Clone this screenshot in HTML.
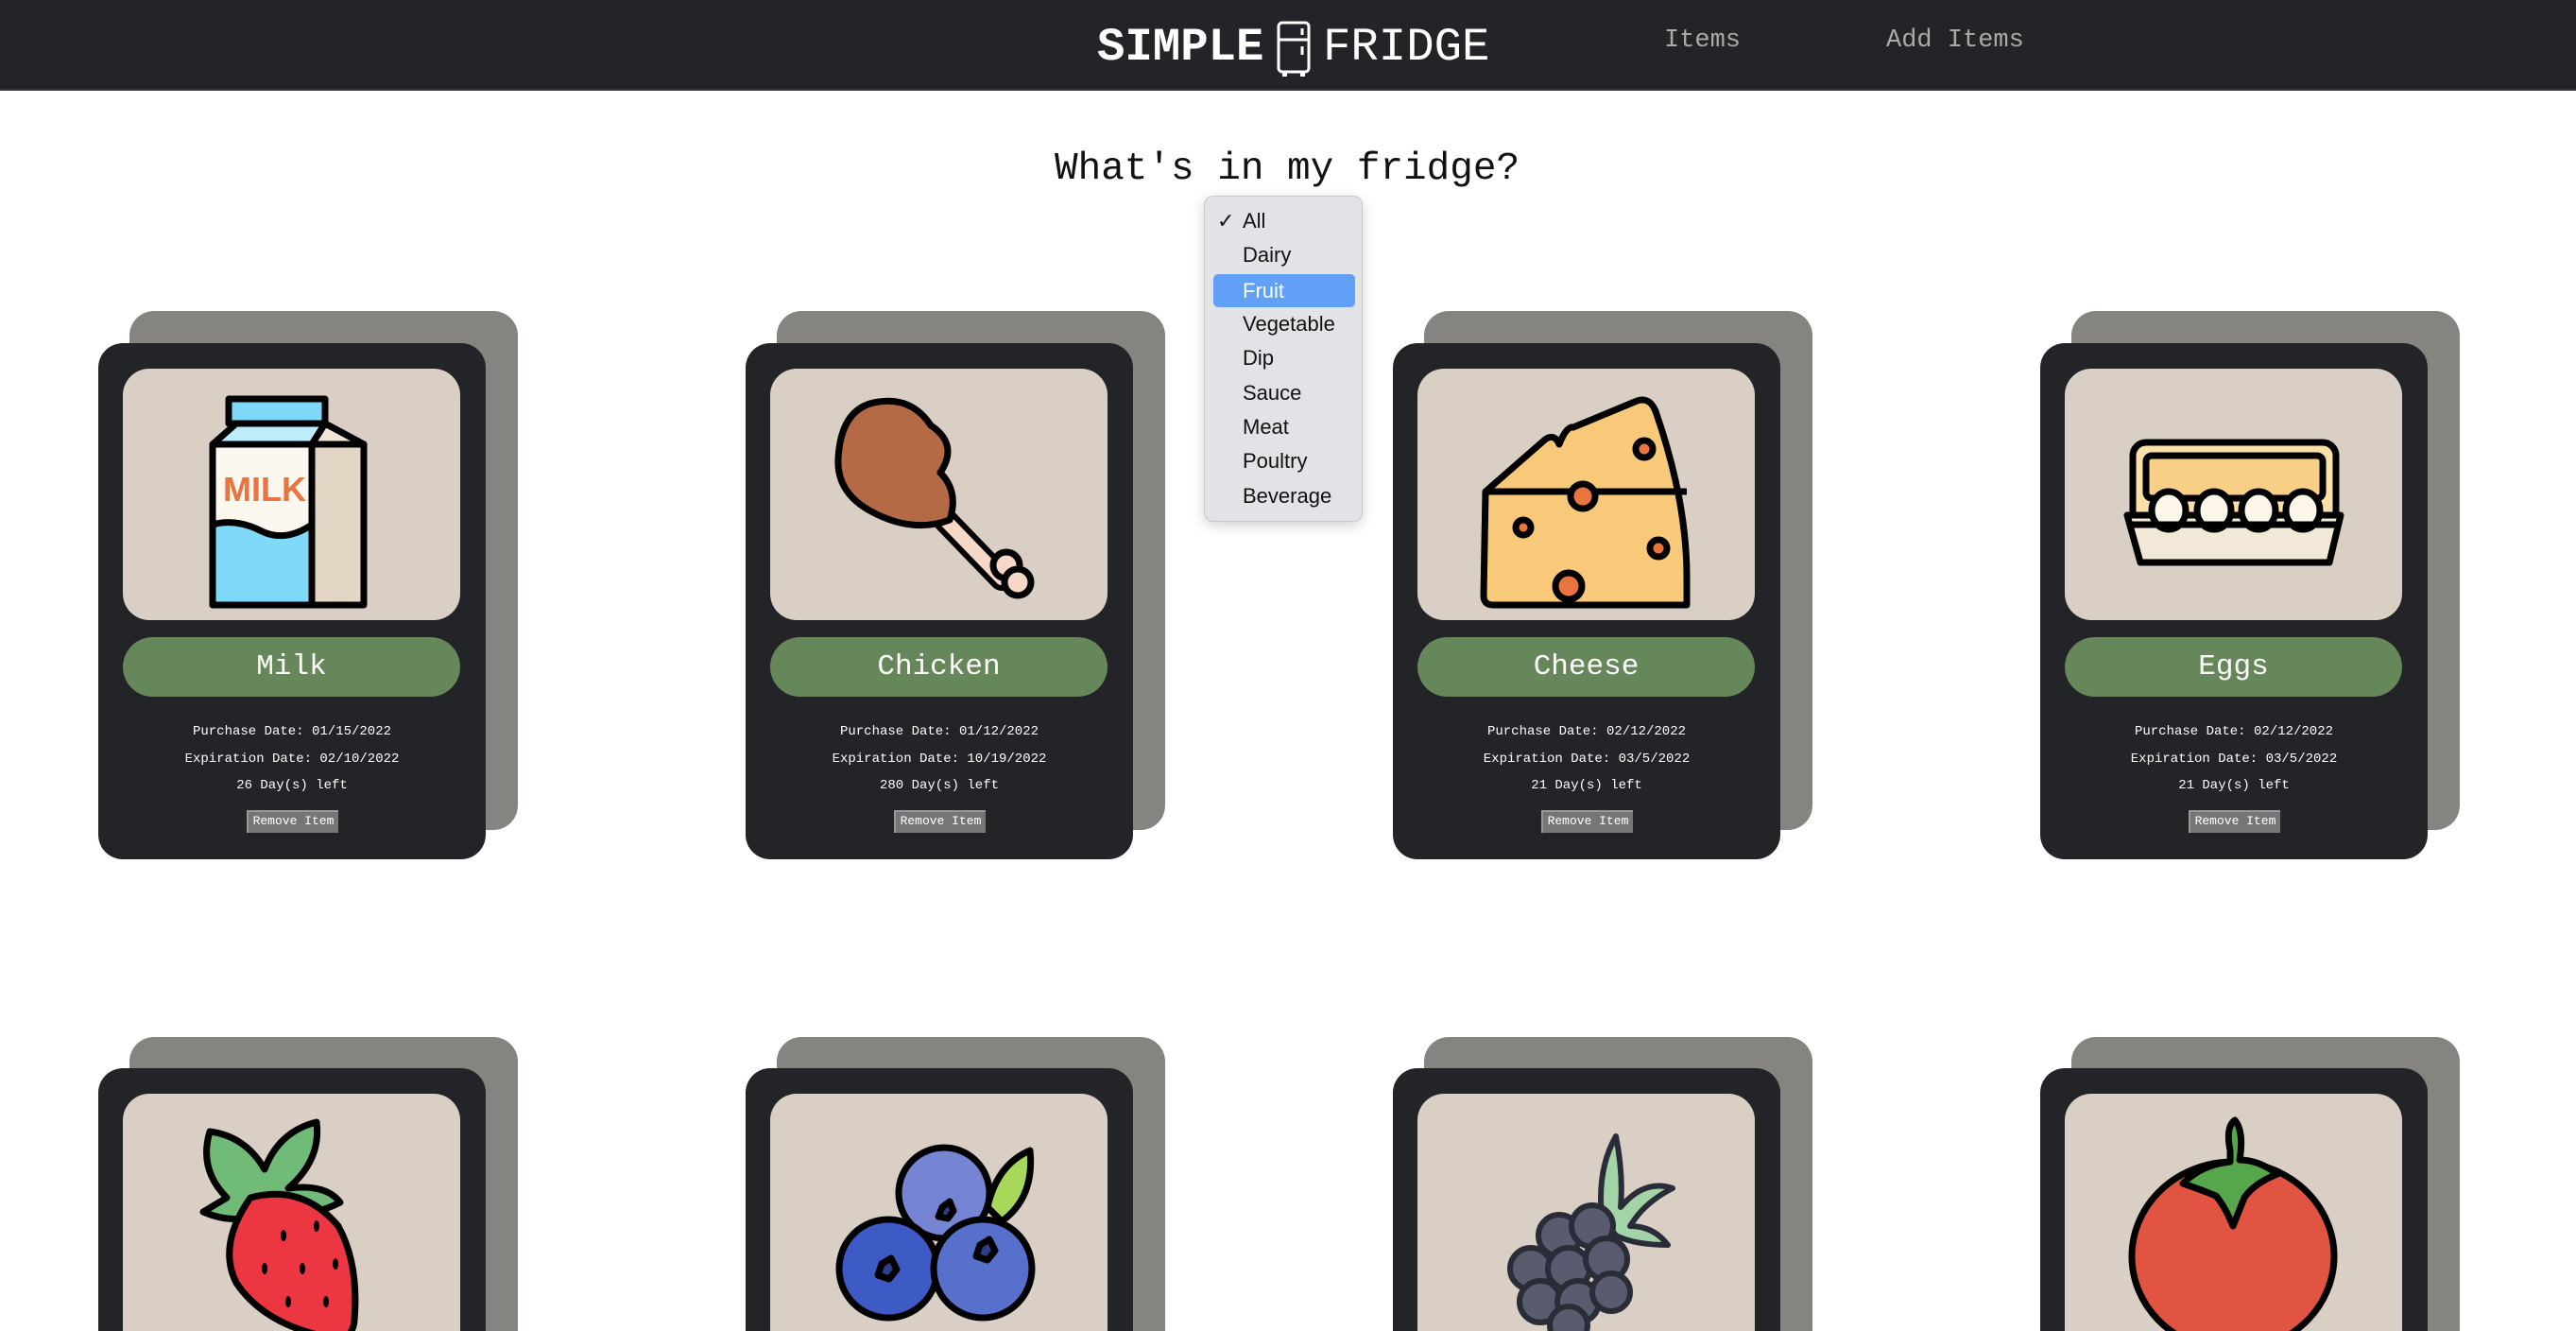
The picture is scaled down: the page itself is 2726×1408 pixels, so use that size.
<!DOCTYPE html>
<html style="width:2726px;height:1408px;overflow:hidden"><head><meta charset="utf-8">
<style>
*{margin:0;padding:0;box-sizing:border-box}
body{width:2726px;height:1408px;overflow:hidden;background:#fff;font-family:"Liberation Mono","Courier New",monospace}
#wrap{position:relative;width:2726px;height:1408px;overflow:hidden}
.hdr{position:absolute;left:0;top:0;width:2726px;height:96px;background:#232427;border-bottom:2px solid #3a3b3e}
.logo1{position:absolute;left:1161px;top:22px;font-size:49px;font-weight:bold;color:#fff;line-height:56px}
.logo2{position:absolute;left:1400px;top:22px;font-size:49px;color:#fff;line-height:56px}
.nav{position:absolute;top:26px;font-size:27px;color:#a9a9a9;line-height:34px}
.title{position:absolute;left:1116px;top:152px;font-size:41px;color:#111;line-height:54px;white-space:pre}
.dd{position:absolute;left:1274px;top:207px;width:168px;height:345px;background:#e2e3e6;border:1px solid #c8c9cc;border-radius:10px;box-shadow:0 4px 14px rgba(0,0,0,.18);font-family:"Liberation Sans",sans-serif;font-size:22px;color:#111}
.dd div{position:absolute;left:40px;height:36px;line-height:36px}
.dd .hl{left:9px;width:150px;height:35px;background:#62a0f8;border-radius:5px;color:#fff;padding-left:31px}
.back{position:absolute;width:411px;height:549px;background:#858480;border-radius:26px}
.card{position:absolute;width:410px;height:546px;background:#232427;border-radius:26px;color:#fff}
.r2b{height:311px;border-radius:26px 26px 0 0}
.r2c{height:278px;border-radius:26px 26px 0 0}
.r2c .pan{height:251px;border-radius:28px 28px 0 0}
.pan{position:absolute;left:26px;top:27px;width:357px;height:266px;background:#d9cfc4;border-radius:28px;overflow:hidden}
.pan svg{position:absolute;left:0;top:0}
.name{position:absolute;left:26px;top:311px;width:357px;height:63px;background:#66875a;border-radius:32px;text-align:center;line-height:63px;font-size:31px}
.t{position:absolute;left:0;width:410px;text-align:center;font-size:14px;line-height:18px}
.btn{position:absolute;left:157px;top:494px;width:97px;height:24px;background:#767676;border-top:2px solid #999;border-left:2px solid #999;font-size:13px;line-height:20px;text-align:center;color:#fff;white-space:nowrap;overflow:hidden}
</style></head><body><div id="wrap">
<div class="hdr">
<div class="logo1">SIMPLE</div>
<svg style="position:absolute;left:1350px;top:22px" width="38" height="60" viewBox="0 0 38 60"><rect x="3" y="2" width="32" height="52" rx="4" fill="none" stroke="#fff" stroke-width="3"/><line x1="3" y1="20" x2="35" y2="20" stroke="#fff" stroke-width="3"/><line x1="28" y1="8" x2="28" y2="15" stroke="#fff" stroke-width="3"/><line x1="28" y1="27" x2="28" y2="36" stroke="#fff" stroke-width="3"/><rect x="7" y="54" width="5" height="5" fill="#fff"/><rect x="26" y="54" width="5" height="5" fill="#fff"/></svg>
<div class="logo2">FRIDGE</div>
<div class="nav" style="left:1761px">Items</div>
<div class="nav" style="left:1996px">Add Items</div>
</div>
<div class="title">What's in my fridge?</div>

<div class="back" style="left:137px;top:329px"></div>
<div class="card" style="left:104px;top:363px">
<div class="pan"><svg width="357" height="266" viewBox="0 0 357 266">
<g stroke="#000" stroke-width="7" stroke-linejoin="round">
<rect x="112" y="32" width="102" height="26" fill="#7fd9f8"/>
<path d="M95 80 L120 58 L214 58 L200 80 Z" fill="#bdecfa"/>
<path d="M200 80 L214 58 L255 80 Z" fill="#f0e6d6"/>
<rect x="95" y="80" width="105" height="170" fill="#fcf7ef"/>
<rect x="200" y="80" width="55" height="170" fill="#e3d6c4"/>
<path d="M95 165 Q120 158 147 172 Q172 184 200 165 L200 250 L95 250 Z" fill="#7fd9f8"/>
</g>
<text x="150" y="140" text-anchor="middle" font-family="Liberation Sans,sans-serif" font-weight="bold" font-size="36" fill="#ea7440">MILK</text>
</svg></div>
<div class="name">Milk</div>
<div class="t" style="top:402px">Purchase Date: 01/15/2022</div>
<div class="t" style="top:431px">Expiration Date: 02/10/2022</div>
<div class="t" style="top:459px">26 Day(s) left</div>
<div class="btn">Remove Item</div>
</div>

<div class="back" style="left:822px;top:329px"></div>
<div class="card" style="left:789px;top:363px">
<div class="pan"><svg width="357" height="266" viewBox="0 0 357 266">
<g stroke="#000" stroke-width="7" stroke-linejoin="round" stroke-linecap="round">
<path d="M185 160 L245 222" stroke="#000" stroke-width="26"/>
<path d="M185 160 L245 222" stroke="#f6d8c8" stroke-width="14"/>
<circle cx="250" cy="208" r="14" fill="#f6d8c8"/><circle cx="262" cy="226" r="14" fill="#f6d8c8"/>
<path d="M115 35 Q75 40 72 95 Q70 130 105 150 Q150 175 190 160 Q200 130 180 110 Q200 80 170 60 Q150 30 115 35 Z" fill="#b46a45"/>
</g>
</svg></div>
<div class="name">Chicken</div>
<div class="t" style="top:402px">Purchase Date: 01/12/2022</div>
<div class="t" style="top:431px">Expiration Date: 10/19/2022</div>
<div class="t" style="top:459px">280 Day(s) left</div>
<div class="btn">Remove Item</div>
</div>

<div class="back" style="left:1507px;top:329px"></div>
<div class="card" style="left:1474px;top:363px">
<div class="pan"><svg width="357" height="266" viewBox="0 0 357 266">
<g stroke="#000" stroke-width="7" stroke-linejoin="round">
<path d="M72 130 L135 75 Q145 68 150 80 Q158 60 165 62 L230 35 Q245 28 252 45 Q285 140 285 220 L285 250 L80 250 Q70 250 70 240 Z" fill="#f7c978"/>
<path d="M72 130 L285 130" fill="none"/>
<circle cx="240" cy="85" r="9" fill="#ea7440"/>
<circle cx="175" cy="135" r="13" fill="#ea7440"/>
<circle cx="112" cy="168" r="8" fill="#ea7440"/>
<circle cx="160" cy="230" r="14" fill="#ea7440"/>
<circle cx="255" cy="190" r="9" fill="#ea7440"/>
</g>
</svg></div>
<div class="name">Cheese</div>
<div class="t" style="top:402px">Purchase Date: 02/12/2022</div>
<div class="t" style="top:431px">Expiration Date: 03/5/2022</div>
<div class="t" style="top:459px">21 Day(s) left</div>
<div class="btn">Remove Item</div>
</div>

<div class="back" style="left:2192px;top:329px"></div>
<div class="card" style="left:2159px;top:363px">
<div class="pan"><svg width="357" height="266" viewBox="0 0 357 266">
<g stroke="#000" stroke-width="7" stroke-linejoin="round">
<rect x="72" y="78" width="215" height="95" rx="14" fill="#fbe0a8"/>
<rect x="86" y="92" width="187" height="45" rx="6" fill="#f7cf86"/>
<path d="M66 155 L292 155 L280 205 L80 205 Z" fill="#f2e8d8"/>
<ellipse cx="110" cy="150" rx="18" ry="20" fill="#fdf6ea"/>
<ellipse cx="158" cy="150" rx="18" ry="20" fill="#fdf6ea"/>
<ellipse cx="205" cy="150" rx="18" ry="20" fill="#fdf6ea"/>
<ellipse cx="252" cy="150" rx="18" ry="20" fill="#fdf6ea"/>
<path d="M66 165 L292 165" fill="none"/>
</g>
</svg></div>
<div class="name">Eggs</div>
<div class="t" style="top:402px">Purchase Date: 02/12/2022</div>
<div class="t" style="top:431px">Expiration Date: 03/5/2022</div>
<div class="t" style="top:459px">21 Day(s) left</div>
<div class="btn">Remove Item</div>
</div>

<div class="back r2b" style="left:137px;top:1097px"></div>
<div class="card r2c" style="left:104px;top:1130px">
<div class="pan"><svg width="357" height="266" viewBox="0 0 357 266">
<g stroke="#000" stroke-width="7" stroke-linejoin="round">
<path d="M110 110 Q80 80 92 40 Q130 45 150 80 Q165 40 205 30 Q210 70 175 100 Q215 95 230 115 Q190 135 150 125 Q120 140 85 125 Z" fill="#6fbb77"/>
<path d="M135 110 Q190 95 228 140 Q250 180 245 240 Q243 262 220 258 Q150 245 120 200 Q100 160 135 110 Z" fill="#ec3642"/>
</g>
<g fill="#000"><ellipse cx="170" cy="150" rx="3" ry="6"/><ellipse cx="205" cy="140" rx="3" ry="6"/><ellipse cx="150" cy="185" rx="3" ry="6"/><ellipse cx="190" cy="185" rx="3" ry="6"/><ellipse cx="225" cy="180" rx="3" ry="6"/><ellipse cx="175" cy="220" rx="3" ry="6"/><ellipse cx="215" cy="220" rx="3" ry="6"/></g>
</svg></div>
</div>

<div class="back r2b" style="left:822px;top:1097px"></div>
<div class="card r2c" style="left:789px;top:1130px">
<div class="pan"><svg width="357" height="266" viewBox="0 0 357 266">
<g stroke="#000" stroke-width="7" stroke-linejoin="round">
<path d="M230 120 Q240 75 275 60 Q280 110 245 135 Z" fill="#a8d85a"/>
<circle cx="184" cy="105" r="48" fill="#7585d3"/>
<circle cx="125" cy="185" r="52" fill="#3e5ac5"/>
<circle cx="225" cy="185" r="52" fill="#5670cc"/>
<path d="M182 120 l8 -6 l4 10 l-6 8 l-10 -2 Z" fill="#2e3f8a"/>
<path d="M118 180 l10 -6 l6 12 l-8 10 l-12 -4 Z" fill="#2e3f8a"/>
<path d="M222 160 l10 -6 l6 12 l-8 10 l-12 -4 Z" fill="#2e3f8a"/>
</g>
</svg></div>
</div>

<div class="back r2b" style="left:1507px;top:1097px"></div>
<div class="card r2c" style="left:1474px;top:1130px">
<div class="pan"><svg width="357" height="266" viewBox="0 0 357 266">
<g stroke="#2a2d38" stroke-width="6" stroke-linejoin="round">
<path d="M195 130 Q190 80 210 45 Q218 85 215 120 Q240 90 270 100 Q240 115 225 140 Q250 140 265 160 Q230 160 210 150 Z" fill="#a3d4a8"/>
<g fill="#585c6e">
<circle cx="150" cy="150" r="22"/><circle cx="185" cy="140" r="22"/><circle cx="120" cy="185" r="22"/><circle cx="160" cy="185" r="22"/><circle cx="200" cy="175" r="22"/><circle cx="130" cy="220" r="22"/><circle cx="170" cy="220" r="22"/><circle cx="205" cy="210" r="20"/><circle cx="160" cy="245" r="20"/>
</g></g>
</svg></div>
</div>

<div class="back r2b" style="left:2192px;top:1097px"></div>
<div class="card r2c" style="left:2159px;top:1130px">
<div class="pan"><svg width="357" height="266" viewBox="0 0 357 266">
<g stroke="#000" stroke-width="7" stroke-linejoin="round">
<ellipse cx="178" cy="172" rx="107" ry="100" fill="#e15442"/>
<path d="M175 60 Q170 35 180 28 Q190 40 185 70 Q205 70 225 85 Q200 95 190 110 Q182 130 178 140 Q170 120 160 108 Q140 100 125 95 Q145 75 175 72 Z" fill="#56a64c"/>
</g>
</svg></div>
</div>

<div class="dd">
<div style="left:13px;top:8px">✓</div>
<div style="top:8px">All</div>
<div style="top:44px">Dairy</div>
<div class="hl" style="top:82px">Fruit</div>
<div style="top:117px">Vegetable</div>
<div style="top:153px">Dip</div>
<div style="top:190px">Sauce</div>
<div style="top:226px">Meat</div>
<div style="top:262px">Poultry</div>
<div style="top:299px">Beverage</div>
</div>
</div></body></html>
